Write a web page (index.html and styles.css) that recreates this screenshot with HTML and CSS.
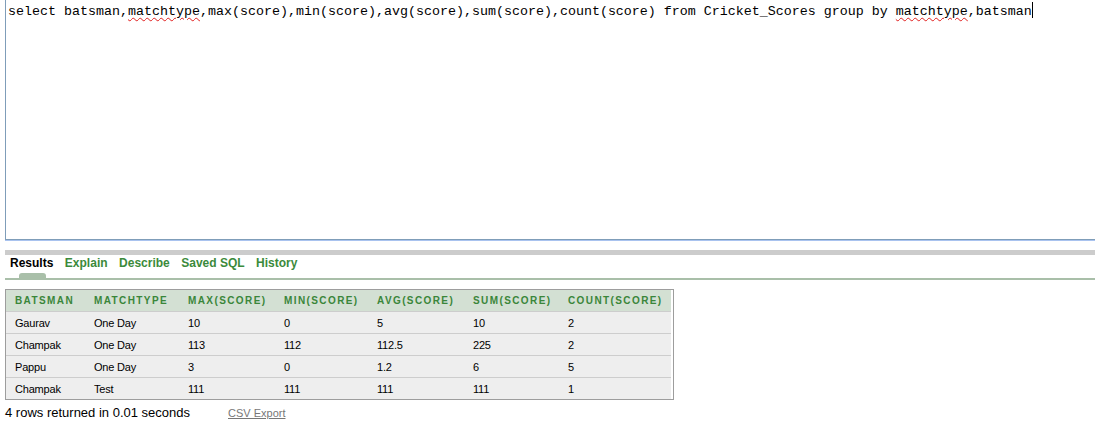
FILE: index.html
```html
<!DOCTYPE html>
<html>
<head>
<meta charset="utf-8">
<link rel="stylesheet" href="styles.css">
</head>
<body>
<div class="editor">select batsman,<span class="misspelt">matchtype</span>,max(score),min(score),avg(score),sum(score),count(score) from Cricket_Scores group by <span class="misspelt">matchtype</span>,batsman<span class="caret"></span></div>
<div class="splitter"></div>
<div class="tabs">
  <span class="tab active">Results</span>
  <span class="tab">Explain</span>
  <span class="tab">Describe</span>
  <span class="tab">Saved SQL</span>
  <span class="tab">History</span>
</div>
<div class="report">
  <table>
    <colgroup>
      <col class="c1"><col class="c2"><col class="c3"><col class="c4"><col class="c5"><col class="c6"><col class="c7">
    </colgroup>
    <thead>
      <tr><th>BATSMAN</th><th>MATCHTYPE</th><th>MAX(SCORE)</th><th>MIN(SCORE)</th><th>AVG(SCORE)</th><th>SUM(SCORE)</th><th>COUNT(SCORE)</th></tr>
    </thead>
    <tbody>
      <tr><td>Gaurav</td><td>One Day</td><td>10</td><td>0</td><td>5</td><td>10</td><td>2</td></tr>
      <tr><td>Champak</td><td>One Day</td><td>113</td><td>112</td><td>112.5</td><td>225</td><td>2</td></tr>
      <tr><td>Pappu</td><td>One Day</td><td>3</td><td>0</td><td>1.2</td><td>6</td><td>5</td></tr>
      <tr><td>Champak</td><td>Test</td><td>111</td><td>111</td><td>111</td><td>111</td><td>1</td></tr>
    </tbody>
  </table>
</div>
<div class="footer">
  <span class="count">4 rows returned in 0.01 seconds</span>
  <a class="export">CSV Export</a>
</div>
</body>
</html>
```
FILE: styles.css
```css
html {
  overflow: hidden;
}
body {
  margin: 0;
  font-family: "Liberation Sans", Arial, sans-serif;
  background: #ffffff;
  color: #000000;
}
.editor {
  box-sizing: border-box;
  margin: -1px 0 0 5px;
  height: 241px;
  padding: 2px;
  border: 1px solid #7f9db9;
  border-right: none;
  box-shadow: 0 1px 0 #a9c3ef;
  font-family: "Liberation Mono", "Courier New", monospace;
  font-size: 13.333px;
  line-height: 15px;
  white-space: pre;
  color: #000;
}
.misspelt {
  text-decoration: underline wavy #e02020;
  text-decoration-thickness: 1px;
  text-underline-offset: 2px;
}
.caret {
  display: inline-block;
  width: 0;
  height: 16px;
  border-left: 1px solid #000;
  vertical-align: -3px;
}
.splitter {
  margin: 10px 0 0 5px;
  height: 5px;
  background: #cccccc;
}
.tabs {
  display: flex;
  gap: 11.5px;
  margin-left: 5px;
  padding: 1px 0 0 5px;
  box-sizing: border-box;
  border-bottom: 2px solid #a9bfa9;
  height: 25px;
}
.tab {
  position: relative;
  font-size: 12px;
  font-weight: bold;
  line-height: 14px;
  color: #3b8a3b;
}
.tab.active {
  color: #000;
}
.tab.active::after {
  content: "";
  position: absolute;
  left: 9px;
  top: 17px;
  width: 27px;
  height: 5px;
  background: #a9bfa9;
  border-radius: 3px 3px 0 0;
}
.report {
  margin: 9px 0 0 5px;
  width: 667px;
  border: 1px solid #9d9d9d;
}
table {
  border-collapse: collapse;
  table-layout: fixed;
  width: 665px;
}
col.c1 { width: 79px; }
col.c2 { width: 94px; }
col.c3 { width: 96px; }
col.c4 { width: 93px; }
col.c5 { width: 96px; }
col.c6 { width: 95px; }
col.c7 { width: 112px; }
th {
  height: 21px;
  padding: 0 0 0 9px;
  text-align: left;
  background: #d3e0d3;
  color: #3a863a;
  font-size: 10px;
  font-weight: bold;
  letter-spacing: 1.4px;
  white-space: nowrap;
}
td {
  height: 21px;
  padding: 0 0 0 9px;
  background: #eeeeee;
  border-top: 1px solid #cdcdcd;
  font-size: 11px;
  letter-spacing: -0.2px;
  color: #000;
  white-space: nowrap;
}
.footer {
  display: flex;
  align-items: baseline;
  margin: 5px 0 0 5px;
}
.count {
  width: 223px;
  font-size: 13px;
  line-height: 15px;
}
.export {
  font-size: 11px;
  color: #777777;
  text-decoration: underline;
}
```
